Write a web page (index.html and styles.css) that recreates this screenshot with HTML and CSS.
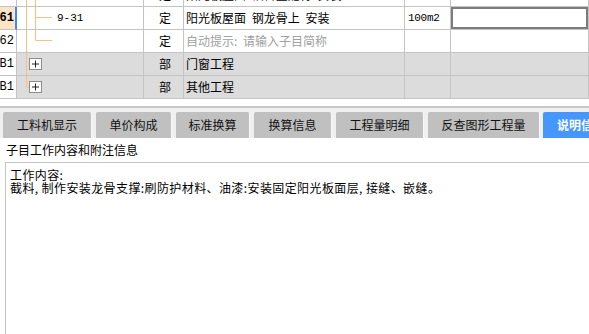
FILE: index.html
```html
<!DOCTYPE html>
<html>
<head>
<meta name="viewport" content="width=device-width, initial-scale=1">
<link rel="stylesheet" href="styles.css">
</head>
<body>

<div class="grid">
  <div class="rows">
    <div class="row">
      <div class="c c-no">60</div>
      <div class="c c-tree">
        <svg width="127" height="22"><path d="M9.5 0V22M18.5 0V22" class="ln"/></svg>
      </div>
      <div class="c c-type">定</div>
      <div class="c c-name">阳光板屋面 铝合金龙骨 安装</div>
      <div class="c c-unit">100m2</div>
      <div class="c"></div>
    </div>
    <div class="row">
      <div class="c c-no sel">61</div>
      <div class="c c-tree">
        <svg width="127" height="22"><path d="M9.5 0V22M18.5 0V22M18.5 10.5H35" class="ln"/></svg>
        <span class="code">9-31</span>
      </div>
      <div class="c c-type">定</div>
      <div class="c c-name">阳光板屋面 钢龙骨上 安装</div>
      <div class="c c-unit">100m2</div>
      <div class="c c-edit"></div>
    </div>
    <div class="row">
      <div class="c c-no">62</div>
      <div class="c c-tree">
        <svg width="127" height="22"><path d="M9.5 0V22M18.5 0V10.5H35" class="ln"/></svg>
      </div>
      <div class="c c-type">定</div>
      <div class="c c-name hint">自动提示: 请输入子目简称</div>
      <div class="c c-unit"></div>
      <div class="c"></div>
    </div>
    <div class="row part">
      <div class="c c-no">B1</div>
      <div class="c c-tree">
        <svg width="127" height="22">
          <path d="M9.5 0V22" class="ln"/>
          <rect x="12.5" y="5.5" width="12" height="11" class="box"/>
          <path d="M15 11H22M18.5 7.5V14.5" class="plus"/>
        </svg>
      </div>
      <div class="c c-type">部</div>
      <div class="c c-name">门窗工程</div>
      <div class="c c-unit"></div>
      <div class="c"></div>
    </div>
    <div class="row part">
      <div class="c c-no">B1</div>
      <div class="c c-tree">
        <svg width="127" height="22">
          <path d="M9.5 0V11H12.5" class="ln"/>
          <rect x="12.5" y="5.5" width="12" height="11" class="box"/>
          <path d="M15 11H22M18.5 7.5V14.5" class="plus"/>
        </svg>
      </div>
      <div class="c c-type">部</div>
      <div class="c c-name">其他工程</div>
      <div class="c c-unit"></div>
      <div class="c"></div>
    </div>
  </div>
</div>

<div class="tabbar">
  <div class="tab">工料机显示</div>
  <div class="tab">单价构成</div>
  <div class="tab">标准换算</div>
  <div class="tab">换算信息</div>
  <div class="tab">工程量明细</div>
  <div class="tab">反查图形工程量</div>
  <div class="tab active">说明信息</div>
</div>

<div class="panel">
  <div class="title">子目工作内容和附注信息</div>
  <div class="memo">
    <div>工作内容:</div>
    <div>截料, 制作安装龙骨支撑:刷防护材料、油漆:安装固定阳光板面层, 接缝、嵌缝。</div>
  </div>
</div>

</body>
</html>
```

FILE: styles.css
```css
body {
    margin: 0;
    font-family: "Noto Sans CJK SC", sans-serif;
    font-size: 12px;
    color: #000;
    background: #fff;
    overflow: hidden;
}

.grid {
    height: 100px;
    overflow: hidden;
}

.rows {
    margin-top: -16px;
}

.row {
    display: grid;
    grid-template-columns: 17px 127px 40px 221px 46px 1fr;
    height: 23px;
}

.c {
    box-sizing: border-box;
    border-right: 1px solid #c4c4c4;
    border-bottom: 1px solid #c4c4c4;
    display: flex;
    align-items: center;
    white-space: nowrap;
    overflow: hidden;
    line-height: 22px;
}

.part .c {
    background: #dcdcdc;
}

.part .c-no {
    background: #fff;
}

.c-no {
    justify-content: flex-end;
    padding-right: 2px;
    font-family: "Liberation Mono", monospace;
    font-size: 12px;
}

.c-no.sel {
    background: #fde5c6;
    font-weight: bold;
    border-right: 2px solid #3d8cf5;
    padding-right: 1px;
}

.c-tree {
    position: relative;
}

.c-tree svg {
    display: block;
    flex: none;
}

.ln {
    fill: none;
    stroke: #f8c07a;
    stroke-width: 1;
}

.box {
    fill: #fff;
    stroke: #8c8c8c;
}

.plus {
    stroke: #222;
    stroke-width: 1;
    fill: none;
}

.code {
    position: absolute;
    left: 40px;
    top: 0;
    font-family: "Liberation Mono", monospace;
    font-size: 11px;
}

.c-type {
    justify-content: center;
    padding-left: 3px;
}

.c-name {
    padding-left: 2px;
    word-spacing: 3px;
}

.hint {
    color: #a0a0a0;
}

.c-unit {
    padding-left: 3px;
    font-family: "Liberation Mono", monospace;
    font-size: 11px;
    letter-spacing: -0.3px;
}

.c-edit {
    box-shadow: inset 0 0 0 2px #7c7c7c;
}

.tabbar {
    margin-top: 6px;
    border-top: 2px solid #c8c8c8;
    background: #f0f0f0;
    padding: 4px 0 0 3px;
    display: flex;
    gap: 4px;
    height: 26px;
    overflow: hidden;
}

.tab {
    flex: none;
    box-sizing: border-box;
    background: #c0c0c0;
    border-radius: 2px 2px 0 0;
    border-right: 1px solid #fafafa;
    font-size: 12px;
    line-height: 26px;
    text-align: center;
    color: #111;
}

.tab:nth-child(1) { width: 89px; }
.tab:nth-child(2) { width: 76px; }
.tab:nth-child(3) { width: 74px; }
.tab:nth-child(4) { width: 78px; }
.tab:nth-child(5) { width: 88px; }
.tab:nth-child(6) { width: 112px; }

.tab.active {
    width: 80px;
    margin-left: -1px;
    background: #4597fd;
    border-right: none;
    color: #fff;
    font-weight: bold;
    text-align: left;
    padding-left: 14px;
}

.panel {
    padding-left: 5px;
}

.title {
    height: 24px;
    line-height: 24px;
    padding-left: 1px;
}

.memo {
    height: 170px;
    border-top: 1px solid #c4c4c4;
    border-left: 1px solid #c4c4c4;
    padding: 5px 0 0 4px;
    line-height: 13px;
    letter-spacing: 0.4px;
}
```
